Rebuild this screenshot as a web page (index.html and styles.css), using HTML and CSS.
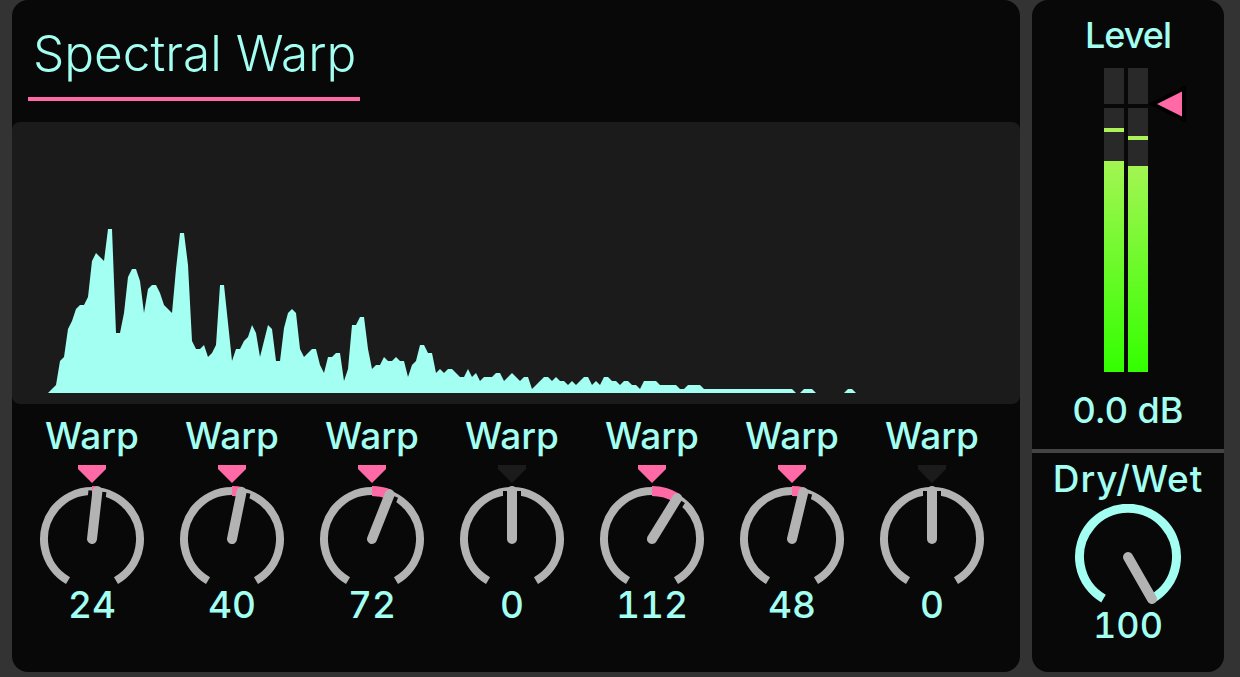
FILE: index.html
```html
<!DOCTYPE html>
<html lang="en">
<head>
    <meta charset="UTF-8">
    <title>Spectral Warp</title>
    <link rel="stylesheet" href="styles.css">
</head>
<body>
    <div class="device">
        <h1 class="title">Spectral Warp</h1>
        <div class="display">
            <svg class="spectrum" width="1008" height="282" viewBox="12 122 1008 282">
                <polygon class="spectrum-fill" points="48,393 56,385 60,361 64,357 68,329 72,321 76,309 80,305 84,305 88,297 92,261 96,253 100,257 104,261 108,229 112,229 116,333 120,333 124,313 128,277 132,269 136,269 140,281 144,313 148,289 152,285 156,285 160,293 164,305 168,309 172,313 176,269 180,233 184,233 188,265 192,341 196,349 200,349 204,345 208,357 212,353 216,345 220,285 224,285 232,361 236,349 240,349 244,341 248,337 252,325 256,333 260,357 264,341 268,325 272,329 276,361 280,361 284,328 288,313 292,309 296,313 300,349 304,357 308,353 312,349 316,349 320,365 324,373 328,357 332,357 336,353 340,353 344,381 348,369 352,325 356,325 360,317 364,317 368,349 372,369 376,365 380,365 384,357 388,361 392,361 396,357 400,361 404,361 408,377 412,365 416,361 420,345 424,345 428,353 432,353 436,373 440,369 444,373 448,369 452,369 456,373 460,377 464,377 468,369 472,377 476,373 480,381 484,377 492,377 496,373 500,373 504,381 512,373 520,381 524,377 528,377 532,389 544,377 548,377 552,381 556,377 560,381 564,381 568,385 572,381 576,385 584,377 588,377 592,385 596,381 600,385 604,377 608,377 612,381 616,381 620,385 624,381 628,381 632,385 636,385 640,389 644,381 656,381 660,385 676,385 680,389 684,389 688,385 700,385 704,389 792,389 796,393 800,393 804,389 812,389 816,393 844,393 848,389 852,389 856,393"/>
            </svg>
        </div>
        <div class="knobs">
            <div class="knob">
                <div class="knob-label">Warp</div>
                <svg class="dial" width="112" height="121" viewBox="-56 -74 112 121">
                    <polygon class="mark" points="-14,-74 -14,-70 0,-56 14,-70 14,-74"/>
                    <path class="arc" d="M-24 41.6A48 48 0 1 1 24 41.6"/>
                    <g transform="rotate(6.5)"><line class="halo" y2="-48"/></g>
                    <path class="amount" d="M0 -48A48 48 0 0 1 5.4 -47.7"/>
                    <g transform="rotate(6.5)"><line class="needle" y2="-48"/></g>
                </svg>
                <div class="knob-value">24</div>
            </div>
            <div class="knob">
                <div class="knob-label">Warp</div>
                <svg class="dial" width="112" height="121" viewBox="-56 -74 112 121">
                    <polygon class="mark" points="-14,-74 -14,-70 0,-56 14,-70 14,-74"/>
                    <path class="arc" d="M-24 41.6A48 48 0 1 1 24 41.6"/>
                    <g transform="rotate(11.5)"><line class="halo" y2="-48"/></g>
                    <path class="amount" d="M0 -48A48 48 0 0 1 9.6 -47"/>
                    <g transform="rotate(11.5)"><line class="needle" y2="-48"/></g>
                </svg>
                <div class="knob-value">40</div>
            </div>
            <div class="knob">
                <div class="knob-label">Warp</div>
                <svg class="dial" width="112" height="121" viewBox="-56 -74 112 121">
                    <polygon class="mark" points="-14,-74 -14,-70 0,-56 14,-70 14,-74"/>
                    <path class="arc" d="M-24 41.6A48 48 0 1 1 24 41.6"/>
                    <g transform="rotate(21.6)"><line class="halo" y2="-48"/></g>
                    <path class="amount" d="M0 -48A48 48 0 0 1 17.7 -44.6"/>
                    <g transform="rotate(21.6)"><line class="needle" y2="-48"/></g>
                </svg>
                <div class="knob-value">72</div>
            </div>
            <div class="knob">
                <div class="knob-label">Warp</div>
                <svg class="dial" width="112" height="121" viewBox="-56 -74 112 121">
                    <polygon class="mark mark-off" points="-14,-74 -14,-70 0,-56 14,-70 14,-74"/>
                    <path class="arc" d="M-24 41.6A48 48 0 1 1 24 41.6"/>
                    <line class="halo" y2="-48"/>
                    <line class="needle" y2="-48"/>
                </svg>
                <div class="knob-value">0</div>
            </div>
            <div class="knob">
                <div class="knob-label">Warp</div>
                <svg class="dial" width="112" height="121" viewBox="-56 -74 112 121">
                    <polygon class="mark" points="-14,-74 -14,-70 0,-56 14,-70 14,-74"/>
                    <path class="arc" d="M-24 41.6A48 48 0 1 1 24 41.6"/>
                    <g transform="rotate(31.7)"><line class="halo" y2="-48"/></g>
                    <path class="amount" d="M0 -48A48 48 0 0 1 25.2 -40.8"/>
                    <g transform="rotate(31.7)"><line class="needle" y2="-48"/></g>
                </svg>
                <div class="knob-value">112</div>
            </div>
            <div class="knob">
                <div class="knob-label">Warp</div>
                <svg class="dial" width="112" height="121" viewBox="-56 -74 112 121">
                    <polygon class="mark" points="-14,-74 -14,-70 0,-56 14,-70 14,-74"/>
                    <path class="arc" d="M-24 41.6A48 48 0 1 1 24 41.6"/>
                    <g transform="rotate(13.6)"><line class="halo" y2="-48"/></g>
                    <path class="amount" d="M0 -48A48 48 0 0 1 11.3 -46.7"/>
                    <g transform="rotate(13.6)"><line class="needle" y2="-48"/></g>
                </svg>
                <div class="knob-value">48</div>
            </div>
            <div class="knob">
                <div class="knob-label">Warp</div>
                <svg class="dial" width="112" height="121" viewBox="-56 -74 112 121">
                    <polygon class="mark mark-off" points="-14,-74 -14,-70 0,-56 14,-70 14,-74"/>
                    <path class="arc" d="M-24 41.6A48 48 0 1 1 24 41.6"/>
                    <line class="halo" y2="-48"/>
                    <line class="needle" y2="-48"/>
                </svg>
                <div class="knob-value">0</div>
            </div>
        </div>
    </div>

    <div class="side">
        <div class="level">
            <div class="level-label">Level</div>
            <div class="meter">
                <div class="channel">
                    <div class="fill" style="height: 211px"></div>
                    <div class="peak" style="top: 60px"></div>
                </div>
                <div class="channel">
                    <div class="fill" style="height: 206px"></div>
                    <div class="peak" style="top: 68px"></div>
                </div>
                <div class="gain-line"></div>
                <svg class="gain-handle" width="44" height="44" viewBox="0 0 44 44">
                    <polygon points="38,9.5 38,34.5 13,22"/>
                </svg>
            </div>
            <div class="level-value">0.0 dB</div>
        </div>
        <div class="drywet">
            <div class="drywet-label">Dry/Wet</div>
            <svg class="dial-big" width="112" height="104" viewBox="-56 -53 112 104">
                <path class="arc-full" d="M-24.5 41.6A48.5 48.5 0 1 1 24.5 41.6"/>
                <line class="needle" x2="24" y2="42"/>
            </svg>
            <div class="drywet-value">100</div>
        </div>
    </div>
</body>
</html>
```

FILE: styles.css
```css
body {
    margin: 0;
    width: 1240px;
    height: 677px;
    box-sizing: border-box;
    padding: 0 16px 5px 12px;
    display: flex;
    gap: 12px;
    overflow: hidden;
    background-color: #333333;
    color: #a3fff2;
    font-family: Inter, sans-serif;
    font-size: 37px;
    font-weight: 450;
}
.device {
    width: 1008px;
    border-radius: 16px;
    background-color: #080808;
}
.title {
    box-sizing: border-box;
    width: 332px;
    height: 101px;
    margin: 0 0 21px 16px;
    padding-left: 5px;
    border-bottom: 4px solid #ff69a6;
    font-size: 49.5px;
    font-weight: 300;
    line-height: 106px;
    white-space: nowrap;
}
.display {
    height: 282px;
    border-radius: 8px;
    background-color: #1b1b1b;
}
.spectrum {
    display: block;
}
.spectrum-fill {
    fill: #a3fff2;
}
.knobs {
    display: flex;
    padding-left: 10px;
}
.knob {
    width: 140px;
    display: flex;
    flex-direction: column;
    align-items: center;
}
.knob-label {
    height: 61px;
    line-height: 64px;
}
.knob-value {
    line-height: 38px;
    font-variant-numeric: tabular-nums;
}
.dial {
    display: block;
}
.mark {
    fill: #ff69a6;
}
.mark-off {
    fill: #1b1b1b;
}
.arc {
    fill: none;
    stroke: #b3b3b3;
    stroke-width: 8;
}
.halo {
    stroke: #080808;
    stroke-width: 18;
}
.amount {
    fill: none;
    stroke: #ff69a6;
    stroke-width: 10;
}
.needle {
    stroke: #b3b3b3;
    stroke-width: 10;
    stroke-linecap: round;
}
.side {
    width: 192px;
    border-radius: 16px;
    background-color: #080808;
    display: flex;
    flex-direction: column;
}
.level {
    box-sizing: border-box;
    height: 453px;
    border-bottom: 4px solid #444444;
    display: flex;
    flex-direction: column;
    align-items: center;
}
.level-label {
    height: 68px;
    font-size: 36px;
    line-height: 70px;
    letter-spacing: -1px;
}
.meter {
    position: relative;
    display: flex;
    gap: 4px;
    height: 304px;
    margin-right: 4px;
}
.channel {
    position: relative;
    width: 20px;
    background-color: #292929;
}
.fill {
    position: absolute;
    left: 0;
    right: 0;
    bottom: 0;
    background: linear-gradient(#a3f552, #33ff00);
}
.peak {
    position: absolute;
    left: 0;
    right: 0;
    height: 4px;
    background-color: #aef25a;
}
.gain-line {
    position: absolute;
    left: 0;
    top: 36px;
    width: 52px;
    height: 4px;
    background-color: #080808;
}
.gain-handle {
    position: absolute;
    left: 40px;
    top: 14px;
}
.gain-handle polygon {
    fill: #ff69a6;
    stroke: #000000;
    stroke-width: 8;
    paint-order: stroke;
}
.level-value {
    margin-top: 15px;
    font-size: 36px;
    line-height: 46px;
}
.drywet {
    display: flex;
    flex-direction: column;
    align-items: center;
}
.drywet-label {
    height: 51px;
    line-height: 52px;
    letter-spacing: 0.9px;
}
.dial-big {
    display: block;
}
.arc-full {
    fill: none;
    stroke: #a3fff2;
    stroke-width: 9;
}
.drywet-value {
    margin-top: -5px;
    font-size: 36px;
    line-height: 44px;
    font-variant-numeric: tabular-nums;
}
```
